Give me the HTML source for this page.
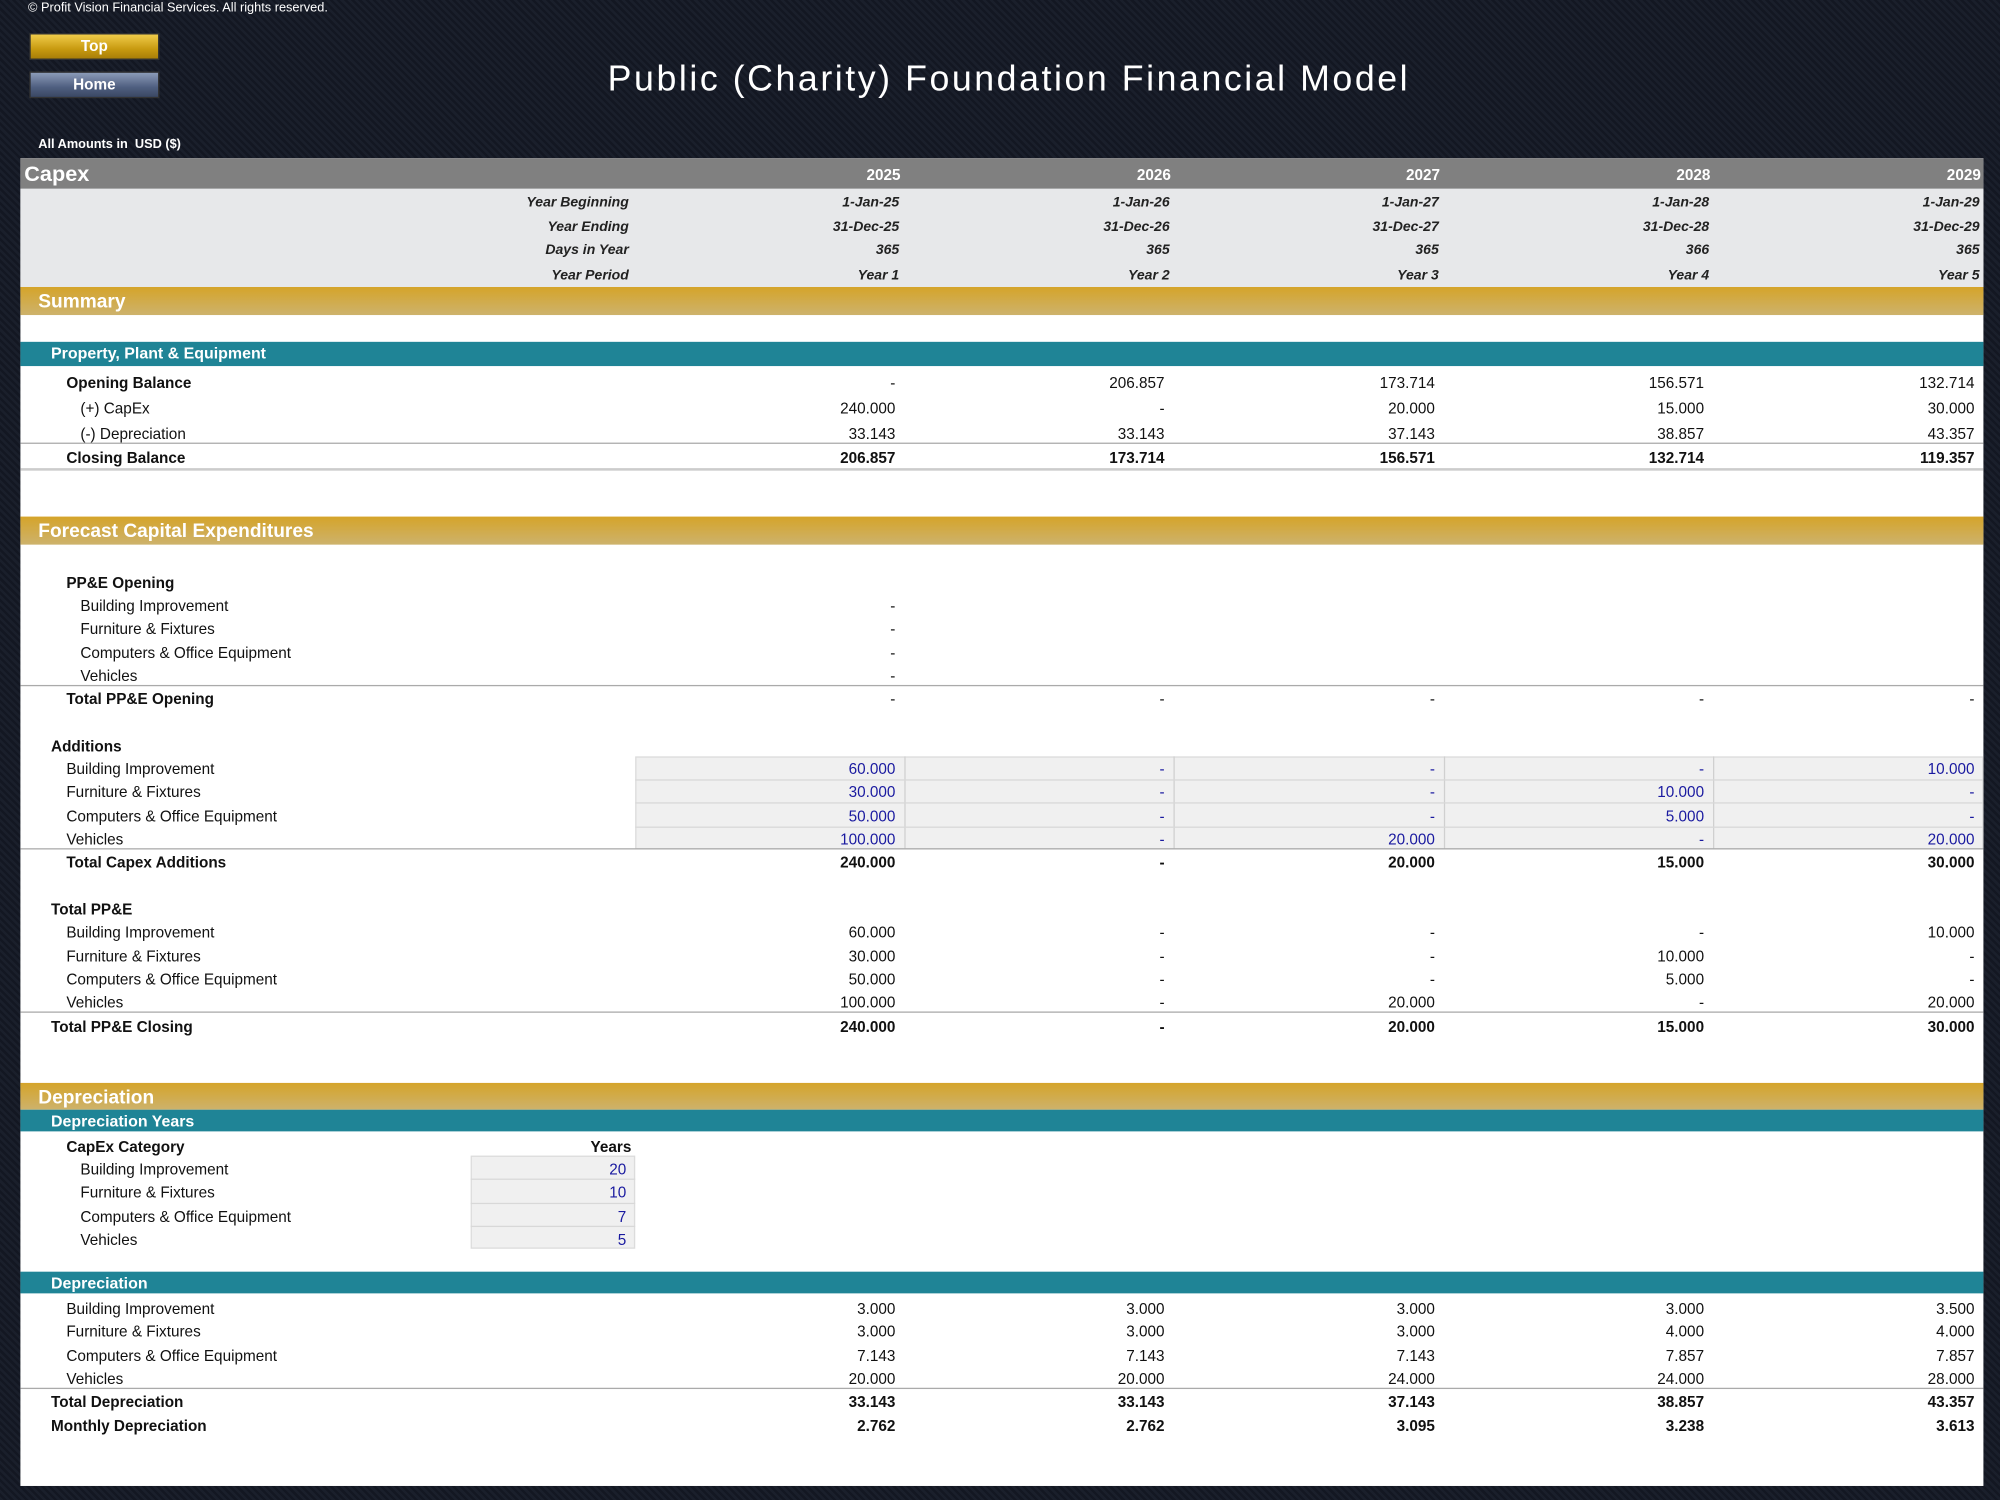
<!DOCTYPE html>
<html><head><meta charset="utf-8"><style>
html,body{margin:0;padding:0;background:#161b26;width:2000px;height:1500px;overflow:hidden}
#w{position:absolute;left:0;top:0;width:1568px;height:1176px;transform:scale(1.27551);transform-origin:0 0;font-family:"Liberation Sans",sans-serif;
background:repeating-linear-gradient(45deg,#1a1f2b 0 2px,#131722 2px 4px)}
.a{position:absolute;white-space:nowrap}
#panel{position:absolute;left:16px;top:124px;width:1539px;height:1041px;background:#fff}
.btn{position:absolute;left:23px;width:100px;height:19px;color:#fff;font-weight:bold;font-size:12px;text-align:center;line-height:19px;border:1px solid #333}
.r{position:absolute;left:0;width:1568px;height:18px;line-height:18px;font-size:12px;color:#111}
.r span{position:absolute;white-space:nowrap}
.v{width:200px;text-align:right}
.c1{left:502px}.c2{left:713px}.c3{left:925px}.c4{left:1136px}.c5{left:1348px}
.b{font-weight:bold}
.h{font-style:italic;font-weight:bold;font-size:11px;color:#222}
.h .c1{left:505px}.h .c2{left:717px}.h .c3{left:928px}.h .c4{left:1140px}.h .c5{left:1352px}
.gold{position:absolute;left:16px;width:1539px;background:linear-gradient(#d5a42a,#cdb26c);color:#fff;font-weight:bold;font-size:15px}
.teal{position:absolute;left:16px;width:1539px;background:#1f8496;color:#fff;font-weight:bold;font-size:12.5px}
.ln{position:absolute;left:16px;width:1539px;height:1px;background:#aaa}
.in{position:absolute;height:18px;background:#f0f0f0;border:1px solid #dcdcdc;box-sizing:border-box}
.blue span.v{color:#1a1aa0}
</style></head><body><div id="w">
<div class="a" style="left:22px;top:1px;font-size:10px;color:#fff">© Profit Vision Financial Services. All rights reserved.</div>
<div class="btn" style="top:26px;background:linear-gradient(#f0cc4a,#c89a10 60%,#a87e08)">Top</div>
<div class="btn" style="top:56px;background:linear-gradient(#8c9bb8,#4f5f80 60%,#3a4763)">Home</div>
<div class="a" style="left:0;width:1582px;text-align:center;top:46px;font-size:28px;letter-spacing:2px;color:#fff">Public (Charity) Foundation Financial Model</div>
<div class="a" style="left:30px;top:108px;font-size:10px;font-weight:bold;color:#fff">All Amounts in&nbsp; USD ($)</div>
<div id="panel"></div>
<div class="a" style="left:16px;top:124px;width:1539px;height:24px;background:#808080"></div>
<div class="a" style="left:19px;top:127px;font-size:17px;font-weight:bold;color:#fff">Capex</div>
<div class="r b" style="top:128px;color:#fff;font-size:12px"><span class="v c1" style="left:506px">2025</span><span class="v c2" style="left:718px">2026</span><span class="v c3" style="left:929px">2027</span><span class="v c4" style="left:1141px">2028</span><span class="v c5" style="left:1353px">2029</span></div>
<div class="a" style="left:16px;top:148px;width:1539px;height:77px;background:#e7e8ea"></div>
<div class="r h" style="top:150px"><span class="v" style="left:293px">Year Beginning</span><span class="v c1">1-Jan-25</span><span class="v c2">1-Jan-26</span><span class="v c3">1-Jan-27</span><span class="v c4">1-Jan-28</span><span class="v c5">1-Jan-29</span></div>
<div class="r h" style="top:169px"><span class="v" style="left:293px">Year Ending</span><span class="v c1">31-Dec-25</span><span class="v c2">31-Dec-26</span><span class="v c3">31-Dec-27</span><span class="v c4">31-Dec-28</span><span class="v c5">31-Dec-29</span></div>
<div class="r h" style="top:187px"><span class="v" style="left:293px">Days in Year</span><span class="v c1">365</span><span class="v c2">365</span><span class="v c3">365</span><span class="v c4">366</span><span class="v c5">365</span></div>
<div class="r h" style="top:207px"><span class="v" style="left:293px">Year Period</span><span class="v c1">Year 1</span><span class="v c2">Year 2</span><span class="v c3">Year 3</span><span class="v c4">Year 4</span><span class="v c5">Year 5</span></div>

<div class="gold" style="top:225px;height:22px;line-height:24px"><span style="margin-left:14px">Summary</span></div>
<div class="teal" style="top:268px;height:19px;line-height:19px"><span style="margin-left:24px">Property, Plant &amp; Equipment</span></div>
<div class="r" style="top:291px"><span class="b" style="left:52px">Opening Balance</span><span class="v c1">-</span><span class="v c2">206.857</span><span class="v c3">173.714</span><span class="v c4">156.571</span><span class="v c5">132.714</span></div>
<div class="r" style="top:311px"><span style="left:63px">(+) CapEx</span><span class="v c1">240.000</span><span class="v c2">-</span><span class="v c3">20.000</span><span class="v c4">15.000</span><span class="v c5">30.000</span></div>
<div class="r" style="top:331px"><span style="left:63px">(-) Depreciation</span><span class="v c1">33.143</span><span class="v c2">33.143</span><span class="v c3">37.143</span><span class="v c4">38.857</span><span class="v c5">43.357</span></div>
<div class="ln" style="top:347px"></div>
<div class="r b" style="top:350px"><span style="left:52px">Closing Balance</span><span class="v c1">206.857</span><span class="v c2">173.714</span><span class="v c3">156.571</span><span class="v c4">132.714</span><span class="v c5">119.357</span></div>
<div class="ln" style="top:367px;height:2px;background:#ccc"></div>

<div class="gold" style="top:405px;height:22px;line-height:24px"><span style="margin-left:14px">Forecast Capital Expenditures</span></div>
<div class="r b" style="top:448px"><span style="left:52px">PP&amp;E Opening</span></div>
<div class="r" style="top:466px"><span style="left:63px">Building Improvement</span><span class="v c1">-</span></div>
<div class="r" style="top:484px"><span style="left:63px">Furniture &amp; Fixtures</span><span class="v c1">-</span></div>
<div class="r" style="top:503px"><span style="left:63px">Computers &amp; Office Equipment</span><span class="v c1">-</span></div>
<div class="r" style="top:521px"><span style="left:63px">Vehicles</span><span class="v c1">-</span></div>
<div class="ln" style="top:537px"></div>
<div class="r" style="top:539px"><span class="b" style="left:52px">Total PP&amp;E Opening</span><span class="v c1">-</span><span class="v c2">-</span><span class="v c3">-</span><span class="v c4">-</span><span class="v c5">-</span></div>

<div class="r b" style="top:576px"><span style="left:40px">Additions</span></div>
<div class="in" style="left:498px;top:593px;width:1057px;height:73px"></div>
<div class="a" style="left:709px;top:593px;width:1px;height:73px;background:#d0d0d0"></div>
<div class="a" style="left:920px;top:593px;width:1px;height:73px;background:#d0d0d0"></div>
<div class="a" style="left:1132px;top:593px;width:1px;height:73px;background:#d0d0d0"></div>
<div class="a" style="left:1343px;top:593px;width:1px;height:73px;background:#d0d0d0"></div>
<div class="a" style="left:498px;top:611px;width:1057px;height:1px;background:#d8d8d8"></div>
<div class="a" style="left:498px;top:629px;width:1057px;height:1px;background:#d8d8d8"></div>
<div class="a" style="left:498px;top:648px;width:1057px;height:1px;background:#d8d8d8"></div>
<div class="r blue" style="top:594px"><span style="left:52px">Building Improvement</span><span class="v c1">60.000</span><span class="v c2">-</span><span class="v c3">-</span><span class="v c4">-</span><span class="v c5">10.000</span></div>
<div class="r blue" style="top:612px"><span style="left:52px">Furniture &amp; Fixtures</span><span class="v c1">30.000</span><span class="v c2">-</span><span class="v c3">-</span><span class="v c4">10.000</span><span class="v c5">-</span></div>
<div class="r blue" style="top:631px"><span style="left:52px">Computers &amp; Office Equipment</span><span class="v c1">50.000</span><span class="v c2">-</span><span class="v c3">-</span><span class="v c4">5.000</span><span class="v c5">-</span></div>
<div class="r blue" style="top:649px"><span style="left:52px">Vehicles</span><span class="v c1">100.000</span><span class="v c2">-</span><span class="v c3">20.000</span><span class="v c4">-</span><span class="v c5">20.000</span></div>
<div class="ln" style="top:665px"></div>
<div class="r b" style="top:667px"><span style="left:52px">Total Capex Additions</span><span class="v c1">240.000</span><span class="v c2">-</span><span class="v c3">20.000</span><span class="v c4">15.000</span><span class="v c5">30.000</span></div>

<div class="r b" style="top:704px"><span style="left:40px">Total PP&amp;E</span></div>
<div class="r" style="top:722px"><span style="left:52px">Building Improvement</span><span class="v c1">60.000</span><span class="v c2">-</span><span class="v c3">-</span><span class="v c4">-</span><span class="v c5">10.000</span></div>
<div class="r" style="top:741px"><span style="left:52px">Furniture &amp; Fixtures</span><span class="v c1">30.000</span><span class="v c2">-</span><span class="v c3">-</span><span class="v c4">10.000</span><span class="v c5">-</span></div>
<div class="r" style="top:759px"><span style="left:52px">Computers &amp; Office Equipment</span><span class="v c1">50.000</span><span class="v c2">-</span><span class="v c3">-</span><span class="v c4">5.000</span><span class="v c5">-</span></div>
<div class="r" style="top:777px"><span style="left:52px">Vehicles</span><span class="v c1">100.000</span><span class="v c2">-</span><span class="v c3">20.000</span><span class="v c4">-</span><span class="v c5">20.000</span></div>
<div class="ln" style="top:793px"></div>
<div class="r b" style="top:796px"><span style="left:40px">Total PP&amp;E Closing</span><span class="v c1">240.000</span><span class="v c2">-</span><span class="v c3">20.000</span><span class="v c4">15.000</span><span class="v c5">30.000</span></div>

<div class="gold" style="top:849px;height:21px;line-height:24px"><span style="margin-left:14px">Depreciation</span></div>
<div class="teal" style="top:870px;height:17px;line-height:18px"><span style="margin-left:24px">Depreciation Years</span></div>
<div class="r b" style="top:890px"><span style="left:52px">CapEx Category</span><span class="v" style="left:295px">Years</span></div>
<div class="in" style="left:369px;top:906px;width:129px;height:73px"></div>
<div class="a" style="left:369px;top:924px;width:129px;height:1px;background:#d8d8d8"></div>
<div class="a" style="left:369px;top:943px;width:129px;height:1px;background:#d8d8d8"></div>
<div class="a" style="left:369px;top:961px;width:129px;height:1px;background:#d8d8d8"></div>
<div class="r blue" style="top:908px"><span style="left:63px">Building Improvement</span><span class="v" style="left:291px">20</span></div>
<div class="r blue" style="top:926px"><span style="left:63px">Furniture &amp; Fixtures</span><span class="v" style="left:291px">10</span></div>
<div class="r blue" style="top:945px"><span style="left:63px">Computers &amp; Office Equipment</span><span class="v" style="left:291px">7</span></div>
<div class="r blue" style="top:963px"><span style="left:63px">Vehicles</span><span class="v" style="left:291px">5</span></div>

<div class="teal" style="top:997px;height:17px;line-height:18px"><span style="margin-left:24px">Depreciation</span></div>
<div class="r" style="top:1017px"><span style="left:52px">Building Improvement</span><span class="v c1">3.000</span><span class="v c2">3.000</span><span class="v c3">3.000</span><span class="v c4">3.000</span><span class="v c5">3.500</span></div>
<div class="r" style="top:1035px"><span style="left:52px">Furniture &amp; Fixtures</span><span class="v c1">3.000</span><span class="v c2">3.000</span><span class="v c3">3.000</span><span class="v c4">4.000</span><span class="v c5">4.000</span></div>
<div class="r" style="top:1054px"><span style="left:52px">Computers &amp; Office Equipment</span><span class="v c1">7.143</span><span class="v c2">7.143</span><span class="v c3">7.143</span><span class="v c4">7.857</span><span class="v c5">7.857</span></div>
<div class="r" style="top:1072px"><span style="left:52px">Vehicles</span><span class="v c1">20.000</span><span class="v c2">20.000</span><span class="v c3">24.000</span><span class="v c4">24.000</span><span class="v c5">28.000</span></div>
<div class="ln" style="top:1088px"></div>
<div class="r b" style="top:1090px"><span style="left:40px">Total Depreciation</span><span class="v c1">33.143</span><span class="v c2">33.143</span><span class="v c3">37.143</span><span class="v c4">38.857</span><span class="v c5">43.357</span></div>
<div class="r b" style="top:1109px"><span style="left:40px">Monthly Depreciation</span><span class="v c1">2.762</span><span class="v c2">2.762</span><span class="v c3">3.095</span><span class="v c4">3.238</span><span class="v c5">3.613</span></div>
</div></body></html>
